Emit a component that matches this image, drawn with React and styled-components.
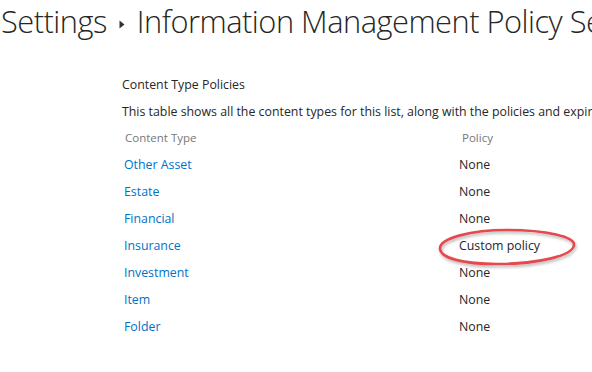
import React from "react";
import styled, { createGlobalStyle } from "styled-components";

const Global = createGlobalStyle`
  html, body { margin: 0; padding: 0; background: #fff; overflow: hidden; }
  body { width: 592px; height: 372px; }
`;

const Page = styled.div`
  width: 592px;
  height: 372px;
  overflow: hidden;
  font-family: "Open Sans", "Noto Sans", sans-serif;
  color: #333;
`;

const TitleRow = styled.h1`
  margin: 0;
  padding: 0 0 0 1px;
  display: flex;
  align-items: center;
  white-space: nowrap;
  font-weight: 300;
  font-size: 30.8px;
  line-height: 42px;
  height: 42px;
  color: #262626;
  letter-spacing: -0.5px;
`;

const Crumb = styled.span`
  flex-shrink: 0;
  color: #262626;
`;

const Sep = styled.span`
  flex-shrink: 0;
  display: inline-flex;
  width: 30px;
  justify-content: center;
  align-items: center;
  padding-top: 6px;
`;

const Content = styled.section`
  margin: 33px 0 0 122px;
  font-size: 12.35px;
  white-space: nowrap;
`;

const Heading = styled.div`
  color: #262626;
  line-height: 20px;
`;

const Desc = styled.div`
  margin-top: 7px;
  color: #262626;
  line-height: 20px;
`;

const Table = styled.div`
  margin-top: 2px;
  display: grid;
  grid-template-columns: 337px auto;
  grid-auto-rows: 27px;
  align-items: center;
`;

const HeadCell = styled.div`
  color: #777;
  font-size: 11.5px;
  padding-left: 3px;
`;

const LinkCell = styled.a`
  color: #0072c6;
  text-decoration: none;
  padding-left: 2px;
`;

const PolicyCell = styled.div`
  color: #262626;
  position: relative;
`;

const Ring = styled.svg`
  position: absolute;
  left: -22px;
  top: -9px;
  width: 140px;
  height: 38px;
  overflow: visible;
  pointer-events: none;
`;

const rows = [
  ["Other Asset", "None"],
  ["Estate", "None"],
  ["Financial", "None"],
  ["Insurance", "Custom policy", true],
  ["Investment", "None"],
  ["Item", "None"],
  ["Folder", "None"],
];

export default function App() {
  return (
    <Page>
      <Global />
      <TitleRow>
        <Crumb>Settings</Crumb>
        <Sep>
          <svg width="6" height="9" viewBox="0 0 6 9">
            <path d="M0.5 0.5 L5.5 4.5 L0.5 8.5 Z" fill="#333" />
          </svg>
        </Sep>
        <Crumb>Information Management Policy Settings</Crumb>
      </TitleRow>
      <Content>
        <Heading>Content Type Policies</Heading>
        <Desc>
          This table shows all the content types for this list, along with the policies and expiration schedules for each type.
        </Desc>
        <Table>
          <HeadCell>Content Type</HeadCell>
          <HeadCell>Policy</HeadCell>
          {rows.map(([name, policy, marked]) => (
            <React.Fragment key={name}>
              <LinkCell href="#">{name}</LinkCell>
              <PolicyCell>
                {policy}
                {marked && (
                  <Ring viewBox="0 0 140 38">
                    <defs>
                      <filter id="sh" x="-20%" y="-50%" width="140%" height="200%">
                        <feDropShadow dx="1" dy="2" stdDeviation="1.5" floodColor="#000" floodOpacity="0.3" />
                      </filter>
                    </defs>
                    <path
                      d="M3 21 C 2 10, 35 2, 70 2 C 110 2, 138 9, 137 17 C 136 28, 100 36, 60 36 C 25 36, 4 30, 3 21 Z"
                      fill="none"
                      stroke="#e5484d"
                      strokeWidth="2.6"
                      filter="url(#sh)"
                    />
                  </Ring>
                )}
              </PolicyCell>
            </React.Fragment>
          ))}
        </Table>
      </Content>
    </Page>
  );
}
